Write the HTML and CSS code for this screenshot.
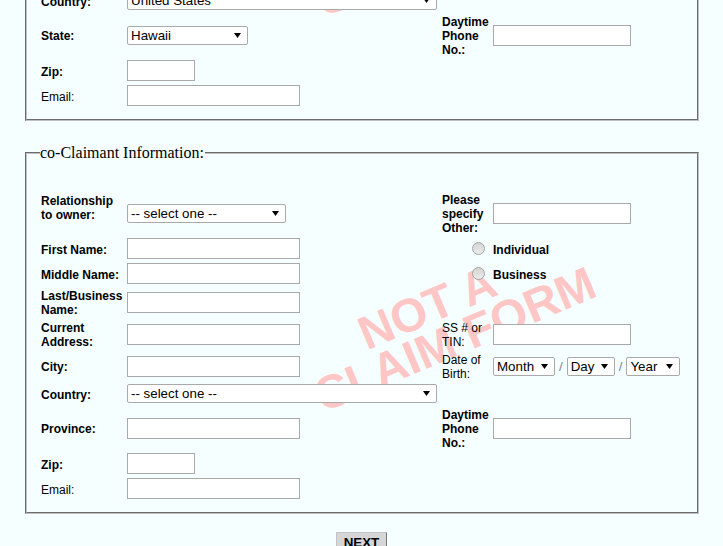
FILE: index.html
```html
<!DOCTYPE html>
<html>
<head>
<meta charset="utf-8">
<title>co-Claimant Information</title>
<link rel="stylesheet" href="styles.css">
</head>
<body>
<div class="page">
  <fieldset class="box box-claimant">
    <div class="grid">
      <div class="watermark wm-claimant"><div class="wm-l1">NOT A</div><div>CLAIM FORM</div></div>

      <label class="lbl c1">Country:</label>
      <div class="field c2"><div class="sel w-country"><select><option>United States</option></select><span class="arrow"><svg width="7" height="5" viewBox="0 0 7 5"><polygon points="0,0 7,0 3.5,5" fill="#000"/></svg></span></div></div>

      <label class="lbl c1">State:</label>
      <div class="field c2"><div class="sel w-state"><select><option>Hawaii</option></select><span class="arrow"><svg width="7" height="5" viewBox="0 0 7 5"><polygon points="0,0 7,0 3.5,5" fill="#000"/></svg></span></div></div>
      <label class="lbl c3">Daytime Phone No.:</label>
      <div class="field c4"><input class="txt w-r" type="text"></div>

      <label class="lbl c1">Zip:</label>
      <div class="field c2"><input class="txt w-zip" type="text"></div>

      <label class="lbl plain c1">Email:</label>
      <div class="field c2"><input class="txt w-std" type="text"></div>
    </div>
  </fieldset>

  <fieldset class="box box-co">
    <legend>co-Claimant Information:</legend>
    <div class="grid">
      <div class="watermark wm-co"><div class="wm-l1">NOT A</div><div>CLAIM FORM</div></div>

      <label class="lbl c1 extra-line">Relationship to owner:</label>
      <div class="field c2"><div class="sel w-rel"><select><option>-- select one --</option></select><span class="arrow"><svg width="7" height="5" viewBox="0 0 7 5"><polygon points="0,0 7,0 3.5,5" fill="#000"/></svg></span></div></div>
      <label class="lbl c3">Please specify Other:</label>
      <div class="field c4"><input class="txt w-r" type="text"></div>

      <label class="lbl c1">First Name:</label>
      <div class="field c2"><input class="txt w-std" type="text"></div>
      <div class="radio-cell c3"><input class="radio" type="radio" name="kind" id="k-ind"></div>
      <label class="lbl c4" for="k-ind">Individual</label>

      <label class="lbl c1">Middle Name:</label>
      <div class="field c2"><input class="txt w-std" type="text"></div>
      <div class="radio-cell c3"><input class="radio" type="radio" name="kind" id="k-bus"></div>
      <label class="lbl c4" for="k-bus">Business</label>

      <label class="lbl c1">Last/Business Name:</label>
      <div class="field c2"><input class="txt w-std" type="text"></div>

      <label class="lbl c1">Current Address:</label>
      <div class="field c2"><input class="txt w-std" type="text"></div>
      <label class="lbl plain c3">SS # or TIN:</label>
      <div class="field c4"><input class="txt w-r" type="text"></div>

      <label class="lbl c1">City:</label>
      <div class="field c2"><input class="txt w-std" type="text"></div>
      <label class="lbl plain c3">Date of Birth:</label>
      <div class="field dob c4">
        <div class="sel w-month"><select><option>Month</option></select><span class="arrow"><svg width="7" height="5" viewBox="0 0 7 5"><polygon points="0,0 7,0 3.5,5" fill="#000"/></svg></span></div>
        <span class="slash">/</span>
        <div class="sel w-day"><select><option>Day</option></select><span class="arrow"><svg width="7" height="5" viewBox="0 0 7 5"><polygon points="0,0 7,0 3.5,5" fill="#000"/></svg></span></div>
        <span class="slash">/</span>
        <div class="sel w-year"><select><option>Year</option></select><span class="arrow"><svg width="7" height="5" viewBox="0 0 7 5"><polygon points="0,0 7,0 3.5,5" fill="#000"/></svg></span></div>
      </div>

      <label class="lbl c1">Country:</label>
      <div class="field c2"><div class="sel w-country"><select><option>-- select one --</option></select><span class="arrow"><svg width="7" height="5" viewBox="0 0 7 5"><polygon points="0,0 7,0 3.5,5" fill="#000"/></svg></span></div></div>

      <label class="lbl c1">Province:</label>
      <div class="field c2"><input class="txt w-std" type="text"></div>
      <label class="lbl c3">Daytime Phone No.:</label>
      <div class="field c4"><input class="txt w-r" type="text"></div>

      <label class="lbl c1">Zip:</label>
      <div class="field c2"><input class="txt w-zip" type="text"></div>

      <label class="lbl plain c1">Email:</label>
      <div class="field c2"><input class="txt w-std" type="text"></div>
    </div>
  </fieldset>

  <div class="actions">
    <button class="next" type="button">NEXT</button>
  </div>
</div>
</body>
</html>
```

FILE: styles.css
```css
html, body {
  margin: 0;
  padding: 0;
}

body {
  background: #f5ffff;
  font-family: "Liberation Sans", Arial, sans-serif;
  font-size: 12px;
  color: #000;
}

.page {
  display: flex;
  flex-direction: column;
}

.box {
  margin: 0 24px 0 25px;
  border: 2px groove #c0c0c0;
  padding: 12px 12px 12px 13px;
  min-width: 0;
}

.box-claimant {
  margin-top: -24px;
}

.box-co {
  margin-top: 23px;
  padding-top: 29px;
}

legend {
  font-family: "Liberation Serif", "Times New Roman", serif;
  font-size: 16px;
  line-height: 18px;
  padding: 0 1px 0 0;
  color: #000;
}

.grid {
  display: grid;
  grid-template-columns: 84px 313px 49px 1fr;
  gap: 2px;
  align-items: center;
  position: relative;
  z-index: 0;
}

.c1 { grid-column: 1; }
.c2 { grid-column: 2; }
.c3 { grid-column: 3; }
.c4 { grid-column: 4; }

.lbl {
  display: block;
  font-weight: bold;
  line-height: 14px;
  padding: 2px 1px 0 1px;
}

.lbl.c1 {
  padding-right: 0;
}

.lbl.c3 {
  padding-right: 0;
}

.lbl.plain {
  font-weight: normal;
}

.extra-line {
  padding-top: 3px;
  padding-bottom: 13px;
}

.field {
  display: flex;
  align-items: center;
  padding: 1px;
}

.txt {
  box-sizing: border-box;
  height: 21px;
  border: 1px solid #a9a9a9;
  background: #fff;
  padding: 1px 2px;
  margin: 0;
  font-family: "Liberation Sans", Arial, sans-serif;
  font-size: 13.33px;
}

.w-std { width: 173px; }
.w-zip { width: 68px; }
.w-r { width: 138px; }

.sel {
  box-sizing: border-box;
  display: flex;
  align-items: center;
  height: 19px;
  border: 1px solid #a9a9a9;
  border-radius: 2px;
  background: #fff;
}

.sel select {
  -webkit-appearance: none;
  appearance: none;
  flex: 1;
  min-width: 0;
  height: 100%;
  margin: 0;
  border: 0;
  padding: 0 0 0 3px;
  background: transparent;
  font-family: "Liberation Sans", Arial, sans-serif;
  font-size: 13.33px;
  color: #000;
  outline: none;
}

.arrow {
  display: flex;
  margin-right: 6px;
}

.w-rel { width: 159px; }
.w-state { width: 121px; }
.w-country { width: 310px; }
.w-month { width: 62px; }
.w-day { width: 48px; }
.w-year { width: 54px; }

.dob {
  gap: 4px;
}

.slash {
  font-size: 13.33px;
  color: #7a8599;
}

.radio-cell {
  display: flex;
  justify-content: flex-end;
  padding: 1px 5px 1px 1px;
}

.radio {
  -webkit-appearance: none;
  appearance: none;
  box-sizing: border-box;
  width: 13px;
  height: 13px;
  margin: 0;
  border: 1px solid #a3a3a3;
  border-radius: 50%;
  background: linear-gradient(#d4d4d4, #ececec);
}

.watermark {
  position: absolute;
  left: 407px;
  z-index: -1;
  transform: translate(-50%, -50%) rotate(-23deg);
  font-family: "Liberation Sans", Arial, sans-serif;
  font-weight: bold;
  font-size: 47px;
  line-height: 40px;
  color: #ffc6c6;
  text-align: center;
  white-space: nowrap;
  pointer-events: none;
}

.wm-l1 {
  padding-right: 26px;
}

.wm-claimant { top: -64.5px; }
.wm-co { top: 129.5px; }

.actions {
  display: flex;
  justify-content: center;
  margin-top: 18px;
}

.next {
  font-family: "Liberation Sans", Arial, sans-serif;
  font-weight: bold;
  font-size: 13.33px;
  color: #000;
  background: #d6d6d6;
  border: 1px solid;
  border-color: #c4c4c4 #7a7a7a #7a7a7a #c4c4c4;
  padding: 2px 7px;
  margin: 0;
}
```
